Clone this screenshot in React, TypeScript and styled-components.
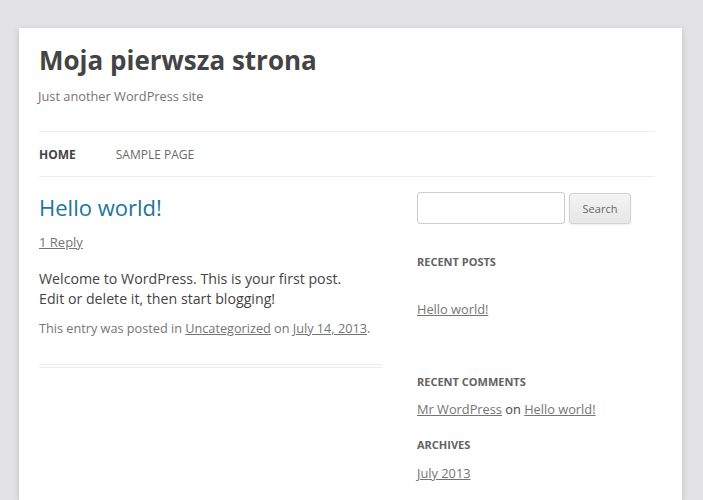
import styled, { createGlobalStyle } from "styled-components";

const GlobalStyle = createGlobalStyle`
  html, body {
    margin: 0;
    padding: 0;
    background: #e3e3e6;
  }
  body {
    font-family: "Open Sans", "Liberation Sans", sans-serif;
    color: #444;
    overflow: hidden;
  }
`;

const Page = styled.div`
  padding-top: 28px;
  height: 500px;
  box-sizing: border-box;
`;

const Panel = styled.div`
  margin-left: 19px;
  width: 663px;
  min-height: 472px;
  box-sizing: border-box;
  background: #fff;
  padding: 14px 27px 0 20px;
  box-shadow: 0 2px 6px rgba(100, 100, 100, 0.3);
`;

const SiteTitle = styled.h1`
  margin: 0;
  font-size: 26px;
  line-height: 36px;
  font-weight: 700;
  color: #444;
`;

const Tagline = styled.h2`
  margin: 8px 0 0 -1px;
  font-size: 12.8px;
  line-height: 20px;
  font-weight: 400;
  color: #757575;
`;

const Nav = styled.nav`
  margin-top: 25px;
  border-top: 1px solid #ededed;
  border-bottom: 1px solid #ededed;
  display: flex;
  gap: 40px;
  height: 44px;
  align-items: center;
`;

const NavItem = styled.a<{ $current?: boolean }>`
  font-size: 12px;
  text-transform: uppercase;
  color: ${(p) => (p.$current ? "#444" : "#6a6a6a")};
  font-weight: ${(p) => (p.$current ? 700 : 400)};
  text-decoration: none;
`;

const Columns = styled.div`
  display: grid;
  grid-template-columns: 343px 238px;
  gap: 35px;
  margin-top: 15px;
`;

const Article = styled.article`
  padding-bottom: 26px;
  border-bottom: 4px double #ededed;
`;

const EntryTitle = styled.h1`
  margin: 0;
  font-size: 22px;
  line-height: 30px;
  font-weight: 400;
  color: #21759b;
`;

const Muted = styled.a`
  color: #757575;
  text-decoration: underline;
`;

const ReplyLine = styled.div`
  margin-top: 10px;
  font-size: 13px;
  line-height: 20px;
`;

const Content = styled.p`
  margin: 17px 0 0;
  font-size: 14.2px;
  line-height: 20px;
  color: #444;
`;

const Meta = styled.footer`
  margin-top: 9px;
  font-size: 12.7px;
  line-height: 20px;
  color: #757575;
`;

const Sidebar = styled.aside`
  display: flex;
  flex-direction: column;
`;

const SearchRow = styled.form`
  display: flex;
  gap: 4px;
  align-items: flex-start;
`;

const SearchInput = styled.input`
  width: 148px;
  height: 32px;
  box-sizing: border-box;
  border: 1px solid #ccc;
  border-radius: 3px;
  padding: 6px;
  font-family: inherit;
`;

const SearchButton = styled.button`
  width: 62px;
  height: 31px;
  margin-top: 1px;
  box-sizing: border-box;
  border: 1px solid #d2d2d2;
  border-radius: 3px;
  background: linear-gradient(to bottom, #f4f4f4, #e6e6e6);
  box-shadow: 0 1px 2px rgba(64, 64, 64, 0.1);
  color: #666;
  font-family: inherit;
  font-size: 11px;
  padding: 0;
`;

const WidgetTitle = styled.h3<{ $gap: number }>`
  margin: ${(p) => p.$gap}px 0 0;
  font-size: 11px;
  line-height: 20px;
  font-weight: 700;
  text-transform: uppercase;
  color: #636363;
`;

const WidgetLine = styled.div<{ $gap: number }>`
  margin-top: ${(p) => p.$gap}px;
  font-size: 12.8px;
  line-height: 20px;
  color: #444;
`;

export default function App() {
  return (
    <>
      <GlobalStyle />
      <Page>
        <Panel>
          <header>
            <SiteTitle>Moja pierwsza strona</SiteTitle>
            <Tagline>Just another WordPress site</Tagline>
            <Nav>
              <NavItem $current>Home</NavItem>
              <NavItem>Sample Page</NavItem>
            </Nav>
          </header>
          <Columns>
            <main>
              <Article>
                <EntryTitle>Hello world!</EntryTitle>
                <ReplyLine>
                  <Muted>1 Reply</Muted>
                </ReplyLine>
                <Content>
                  Welcome to WordPress. This is your first post.
                  <br />
                  Edit or delete it, then start blogging!
                </Content>
                <Meta>
                  This entry was posted in <Muted>Uncategorized</Muted> on <Muted>July 14, 2013</Muted>.
                </Meta>
              </Article>
            </main>
            <Sidebar>
              <SearchRow>
                <SearchInput type="text" />
                <SearchButton type="button">Search</SearchButton>
              </SearchRow>
              <WidgetTitle $gap={28}>Recent Posts</WidgetTitle>
              <WidgetLine $gap={27}>
                <Muted>Hello world!</Muted>
              </WidgetLine>
              <WidgetTitle $gap={53}>Recent Comments</WidgetTitle>
              <WidgetLine $gap={7}>
                <Muted>Mr WordPress</Muted> on <Muted>Hello world!</Muted>
              </WidgetLine>
              <WidgetTitle $gap={16}>Archives</WidgetTitle>
              <WidgetLine $gap={8}>
                <Muted>July 2013</Muted>
              </WidgetLine>
            </Sidebar>
          </Columns>
        </Panel>
      </Page>
    </>
  );
}
